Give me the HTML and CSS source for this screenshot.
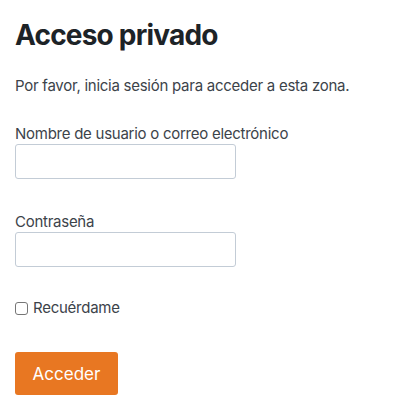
FILE: index.html
```html
<!DOCTYPE html>
<html lang="es">
<head>
  <meta charset="UTF-8" />
  <meta name="viewport" content="width=device-width, initial-scale=1.0" />
  <title>Acceso privado</title>
  <link rel="stylesheet" href="styles.css">
</head>
<body>
  <div class="login">
    <h1 class="login-title">Acceso privado</h1>
    <p class="login-intro">Por favor, inicia sesión para acceder a esta zona.</p>

    <form class="login-form" onsubmit="return false">
      <div class="field">
        <label for="user_login">Nombre de usuario o correo electrónico</label>
        <input type="text" id="user_login" class="input" />
      </div>
      <div class="field">
        <label for="user_pass">Contraseña</label>
        <input type="password" id="user_pass" class="input" />
      </div>
      <div class="remember">
        <input type="checkbox" id="rememberme" class="checkbox" />
        <label for="rememberme">Recuérdame</label>
      </div>
      <button type="submit" class="button">Acceder</button>
    </form>
  </div>
</body>
</html>
```

FILE: styles.css
```css
* {
  box-sizing: border-box;
  margin: 0;
  padding: 0;
}

html, body {
  background: #fff;
  color: #3c434a;
  font-family: Inter, "Noto Sans", sans-serif;
  font-size: 15px;
  letter-spacing: -0.26px;
}

.login {
  padding: 18px 15px 15px;
}

.login-title {
  font-size: 28px;
  font-weight: 700;
  line-height: 34px;
  color: #1d2327;
  letter-spacing: -0.8px;
}

.login-intro {
  margin-top: 23px;
  line-height: 22px;
}

.login-form {
  margin-top: 27px;
}

.field {
  margin-bottom: 33px;
}

.field label {
  display: block;
  line-height: 20px;
}

.input {
  display: block;
  width: 221px;
  height: 35px;
  border: 1px solid #c3ccd6;
  border-radius: 3px;
  background: #fff;
  padding: 0 8px;
  font: inherit;
}

.remember {
  display: flex;
  align-items: center;
  gap: 5px;
  line-height: 20px;
  margin-top: -2px;
}

.checkbox {
  appearance: none;
  width: 13px;
  height: 13px;
  border: 1px solid #767676;
  border-radius: 3px;
  background: #fff;
}

.button {
  margin-top: 34px;
  width: 103px;
  height: 43px;
  border: none;
  border-radius: 3px;
  background: #e87722;
  color: #fff;
  font: inherit;
  font-size: 17px;
  cursor: pointer;
}
```
